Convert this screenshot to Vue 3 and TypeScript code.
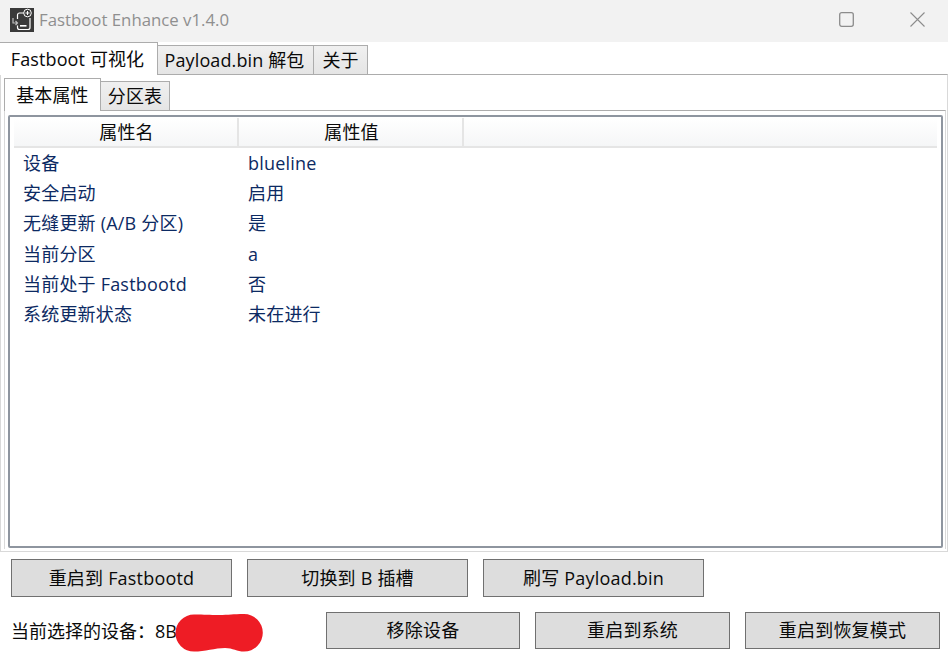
<template>
  <div class="window">
    <header class="titlebar">
      <svg class="logo" width="24" height="24" viewBox="0 0 24 24">
        <rect width="24" height="24" fill="#3a3a3a" />
        <path d="M7.500 11V7a2 2 0 0 1 2-2H14" fill="none" stroke="#fff" stroke-width="1.2" />
        <path d="M3 10v5h4.500M5.500 13l2 2-2 2" fill="none" stroke="#bdbdbd" stroke-width="1.2" />
        <path d="M7.500 17.500v2a2 2 0 0 0 2 2h8.500a2 2 0 0 0 2-2V10" fill="none" stroke="#fff" stroke-width="1.2" />
        <rect x="10" y="17" width="6.500" height="1.600" fill="#fff" />
        <circle cx="17.500" cy="5" r="3.800" fill="#3a3a3a" stroke="#fff" stroke-width="1" />
        <path d="M15.500 5h4M17.500 3v4" stroke="#fff" stroke-width="1" />
      </svg>
      <span class="app-title">Fastboot Enhance v1.4.0</span>
      <div class="win-controls">
        <svg width="15" height="15" viewBox="0 0 15 15">
          <rect x="0.7" y="0.7" width="13.600" height="13.600" rx="2" fill="none" stroke="#8c8c8c" stroke-width="1.300" />
        </svg>
        <svg width="15" height="15" viewBox="0 0 15 15">
          <path d="M0.500 0.500l14 14M14.500 0.500l-14 14" stroke="#8c8c8c" stroke-width="1.100" />
        </svg>
      </div>
    </header>

    <nav class="tabs outer-tabs">
      <div
        v-for="(tab, i) in outerTabs"
        :key="tab"
        class="tab"
        :class="{ active: i === 0 }"
      >
        {{ tab }}
      </div>
    </nav>

    <section class="outer-pane">
      <nav class="tabs inner-tabs">
        <div
          v-for="(tab, i) in innerTabs"
          :key="tab"
          class="tab"
          :class="{ active: i === 0 }"
        >
          {{ tab }}
        </div>
      </nav>
      <div class="inner-pane">
        <div class="table-frame">
          <div class="table-head">
            <div class="head-cell">属性名</div>
            <div class="head-cell">属性值</div>
          </div>
          <div v-for="row in rows" :key="row[0]" class="table-row">
            <div class="cell">{{ row[0] }}</div>
            <div class="cell">{{ row[1] }}</div>
          </div>
        </div>
      </div>
    </section>

    <div class="actions">
      <button v-for="label in topActions" :key="label" class="btn btn-top">{{ label }}</button>
    </div>

    <footer class="footer">
      <div class="device">
        <span>当前选择的设备：8B</span>
        <svg class="redaction" width="88" height="38" viewBox="0 0 88 38">
          <path
            d="M19 0.500C30 0.500 34 1 44 1C54 1 58 0 69 0A18.800 18.800 0 0 1 69 37.600C62 37.600 58 34 50 34C40 34 30 37.600 19 37.600A18.500 18.500 0 0 1 19 0.500Z"
            fill="#ee1c25"
          />
        </svg>
      </div>
      <div class="footer-actions">
        <button v-for="label in bottomActions" :key="label" class="btn btn-bottom">{{ label }}</button>
      </div>
    </footer>
  </div>
</template>

<script setup lang="ts">
const outerTabs = ["Fastboot 可视化", "Payload.bin 解包", "关于"];
const innerTabs = ["基本属性", "分区表"];

const rows: [string, string][] = [
  ["设备", "blueline"],
  ["安全启动", "启用"],
  ["无缝更新 (A/B 分区)", "是"],
  ["当前分区", "a"],
  ["当前处于 Fastbootd", "否"],
  ["系统更新状态", "未在进行"],
];

const topActions = ["重启到 Fastbootd", "切换到 B 插槽", "刷写 Payload.bin"];
const bottomActions = ["移除设备", "重启到系统", "重启到恢复模式"];
</script>

<style>
html,
body {
  margin: 0;
  background: #fff;
  overflow: hidden;
}
</style>

<style scoped>
.window {
  width: 948px;
  height: 658px;
  display: flex;
  flex-direction: column;
  background: #fff;
  font-family: "Open Sans", "Noto Sans CJK SC", sans-serif;
  font-size: 18px;
  color: #0a0a0a;
  overflow: hidden;
}
.titlebar {
  height: 42px;
  flex: none;
  display: flex;
  align-items: center;
  padding: 0 23px 3px 10px;
  box-sizing: border-box;
  background: #f2f2f2;
}
.logo {
  flex: none;
}
.app-title {
  margin-left: 5px;
  font-size: 16.800px;
  color: #8f8f8f;
}
.win-controls {
  margin-left: auto;
  display: flex;
  gap: 56px;
}
.win-controls svg {
  display: block;
}
.tabs {
  display: flex;
  align-items: flex-end;
  flex: none;
}
.outer-tabs {
  height: 32px;
  position: relative;
  z-index: 1;
}
.tab {
  box-sizing: border-box;
  border: 1px solid #acacac;
  border-bottom: none;
  background: linear-gradient(#f0f0f0, #e5e5e5);
  display: flex;
  align-items: center;
  justify-content: center;
  white-space: nowrap;
  letter-spacing: 0.120px;
  padding-bottom: 3px;
}
.outer-tabs .tab {
  height: 29px;
  margin-left: -1px;
}
.outer-tabs .tab:first-child {
  margin-left: 0;
  width: 158px;
  padding-right: 2px;
}
.outer-tabs .tab:nth-child(2) {
  width: 157px;
  padding-right: 2px;
}
.outer-tabs .tab:nth-child(3) {
  width: 55px;
}
.tab.active {
  background: #fff;
}
.outer-tabs .tab.active {
  height: 33px;
  border-left: none;
  margin-bottom: -1px;
}
.outer-pane {
  height: 478px;
  flex: none;
  box-sizing: border-box;
  border-top: 1px solid #acacac;
  border-bottom: 1px solid #d9d9d9;
  border-left: 1px solid #d9d9d9;
  border-right: 1px solid #d9d9d9;
  padding: 3px 1px 2px 3px;
  display: flex;
  flex-direction: column;
}
.inner-tabs {
  height: 32px;
  position: relative;
  z-index: 1;
}
.inner-tabs .tab.active {
  width: 97px;
  height: 33px;
  margin-bottom: -1px;
}
.inner-tabs .tab:nth-child(2) {
  width: 70px;
  height: 29px;
  margin-left: -1px;
}
.inner-pane {
  flex: 1;
  min-height: 0;
  box-sizing: border-box;
  border-top: 1px solid #acacac;
  border-left: 1px solid #d9d9d9;
  border-right: 1px solid #d9d9d9;
  padding: 4px 2px 1px 3px;
}
.table-frame {
  height: 100%;
  box-sizing: border-box;
  border: 2px solid #8e959f;
  border-radius: 2px;
  padding: 1px 4px;
  overflow: hidden;
}
.table-head {
  display: flex;
  height: 30px;
  border-bottom: 2px solid #e5e5e5;
  box-sizing: border-box;
  background: linear-gradient(#fff, #f5f6f7);
  margin-bottom: -0.500px;
}
.head-cell {
  width: 225px;
  box-sizing: border-box;
  border-right: 2px solid #e5e5e5;
  text-align: center;
  line-height: 28px;
  letter-spacing: 0.120px;
  padding-left: 2px;
}
.table-row {
  display: flex;
  height: 30.400px;
  color: #0c2a63;
}
.cell {
  width: 225px;
  padding-left: 9px;
  box-sizing: border-box;
  line-height: 30px;
  white-space: nowrap;
  letter-spacing: 0.200px;
}
.actions {
  display: flex;
  gap: 15px;
  padding: 7px 0 0 11px;
  flex: none;
}
.btn {
  font: inherit;
  color: #0a0a0a;
  background: #dddddd;
  border: 1px solid #707070;
  border-radius: 0;
  box-sizing: border-box;
  padding: 0 0 3px;
  letter-spacing: 0.200px;
}
.btn-top {
  width: 221px;
  height: 38px;
}
.footer {
  display: flex;
  align-items: center;
  justify-content: space-between;
  margin-top: 15px;
  padding: 0 8px 0 11px;
  height: 37px;
}
.device {
  display: flex;
  align-items: center;
  position: relative;
  top: -1px;
}
.redaction {
  position: absolute;
  left: 164px;
  top: -3px;
}
.footer-actions {
  display: flex;
  gap: 15px;
}
.btn-bottom {
  width: 195px;
  height: 37px;
}
.btn-bottom:first-child {
  width: 194px;
}
</style>
